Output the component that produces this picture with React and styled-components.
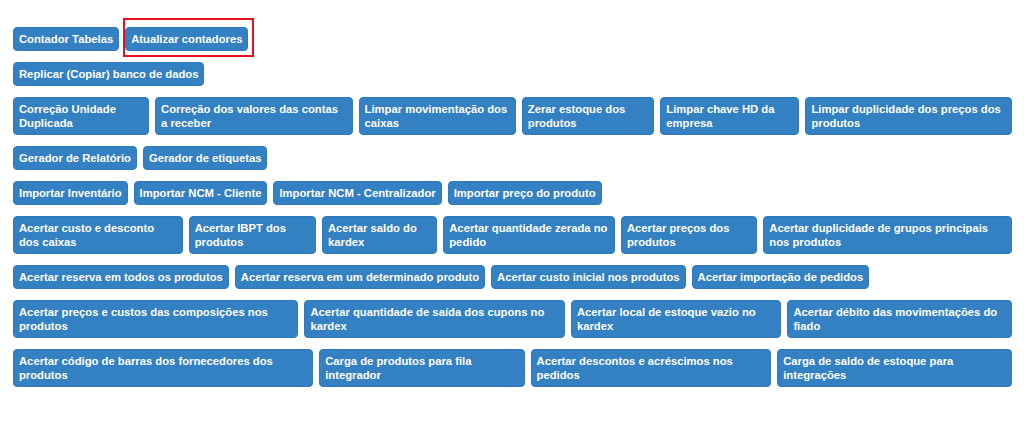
import React from 'react'
import styled, { createGlobalStyle } from 'styled-components'

const GlobalStyle = createGlobalStyle`
  body {
    margin: 0;
    background: #ffffff;
    font-family: "Liberation Sans", Arial, sans-serif;
  }
`

const Page = styled.div`
  display: flex;
  flex-direction: column;
  gap: 11px;
  padding: 27px 12px 20px 13px;
`

const Row = styled.div`
  display: flex;
  flex-wrap: nowrap;
  align-items: stretch;
  gap: 6px;
`

const ActionButton = styled.button`
  position: relative;
  flex: 0 1 auto;
  background-color: #3380c3;
  border: 1px solid #3179bb;
  border-radius: 4px;
  color: #ffffff;
  font-family: "Liberation Sans", Arial, sans-serif;
  font-size: 11.25px;
  font-weight: bold;
  line-height: 14px;
  text-align: left;
  padding: 4px 5px;
  cursor: pointer;

  ${({ $marked }) => $marked && `
    &::after {
      content: '';
      position: absolute;
      top: -10px;
      left: -3px;
      right: -7px;
      bottom: -7px;
      border: 2px solid #e5121b;
      pointer-events: none;
    }
  `}
`

const groups = [
  ['Contador Tabelas', 'Atualizar contadores'],
  ['Replicar (Copiar) banco de dados'],
  [
    'Correção Unidade Duplicada',
    'Correção dos valores das contas a receber',
    'Limpar movimentação dos caixas',
    'Zerar estoque dos produtos',
    'Limpar chave HD da empresa',
    'Limpar duplicidade dos preços dos produtos',
  ],
  ['Gerador de Relatório', 'Gerador de etiquetas'],
  ['Importar Inventário', 'Importar NCM - Cliente', 'Importar NCM - Centralizador', 'Importar preço do produto'],
  [
    'Acertar custo e desconto dos caixas',
    'Acertar IBPT dos produtos',
    'Acertar saldo do kardex',
    'Acertar quantidade zerada no pedido',
    'Acertar preços dos produtos',
    'Acertar duplicidade de grupos principais nos produtos',
  ],
  [
    'Acertar reserva em todos os produtos',
    'Acertar reserva em um determinado produto',
    'Acertar custo inicial nos produtos',
    'Acertar importação de pedidos',
  ],
  [
    'Acertar preços e custos das composições nos produtos',
    'Acertar quantidade de saída dos cupons no kardex',
    'Acertar local de estoque vazio no kardex',
    'Acertar débito das movimentações do fiado',
  ],
  [
    'Acertar código de barras dos fornecedores dos produtos',
    'Carga de produtos para fila integrador',
    'Acertar descontos e acréscimos nos pedidos',
    'Carga de saldo de estoque para integrações',
  ],
]

const App = () => {
  return (
    <>
      <GlobalStyle />
      <Page>
        {groups.map((labels, i) => (
          <Row key={i}>
            {labels.map((label) => (
              <ActionButton key={label} $marked={label === 'Atualizar contadores'}>
                {label}
              </ActionButton>
            ))}
          </Row>
        ))}
      </Page>
    </>
  )
}

export default App
